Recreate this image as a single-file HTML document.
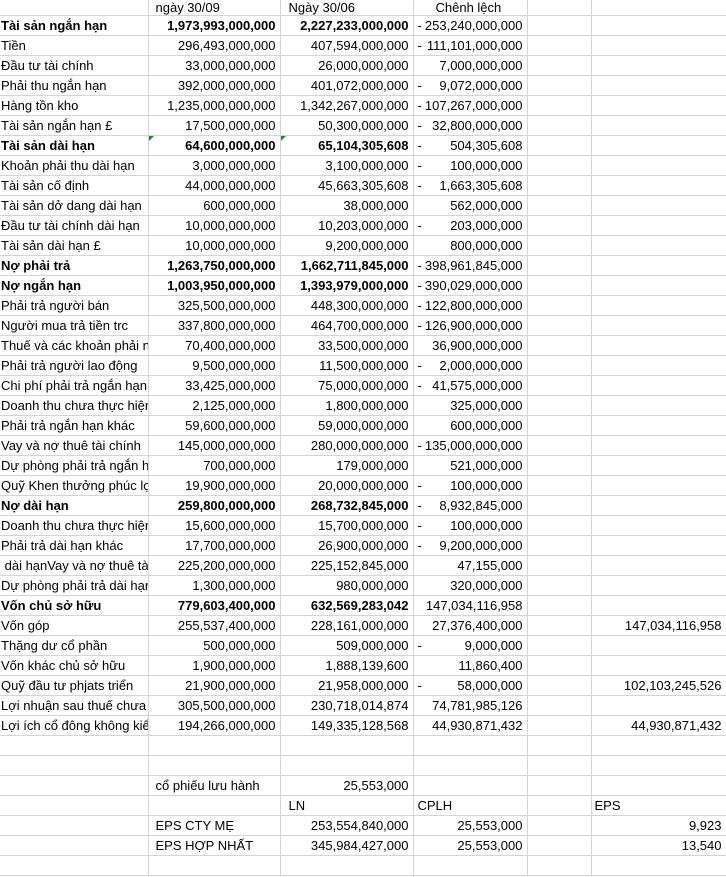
<!DOCTYPE html>
<html><head><meta charset="utf-8">
<style>
html,body{margin:0;padding:0;background:#fff;width:726px;height:877px;overflow:hidden}
table{border-collapse:collapse;table-layout:fixed;width:726px;font-family:"Liberation Sans",sans-serif;font-size:13px;color:#000}
td{border-right:1px solid #d4d4d4;border-bottom:1px solid #d4d4d4;height:19px;padding:0 4px 0 3px;white-space:nowrap;overflow:hidden;text-align:right;line-height:19px;position:relative}
td.l{text-align:left;padding-left:1px}
tr.h td{height:15px;line-height:14px}
tr.b td{font-weight:bold}
.d{float:left;margin-left:1px}
.g:before{content:"";position:absolute;left:0;top:0;border-top:5px solid #1e8a3a;border-right:5px solid transparent}
</style></head><body>
<table>
<colgroup><col style="width:148px"><col style="width:132px"><col style="width:133px"><col style="width:114px"><col style="width:64px"><col style="width:135px"></colgroup>
<tr class="h"><td class="l"></td><td class="l" style="padding-left:7px">ngày 30/09</td><td class="l" style="padding-left:8px">Ngày 30/06</td><td class="l" style="padding-left:22px">Chênh lệch</td><td></td><td></td></tr>
<tr class="b"><td class="l">Tài sản ngắn hạn</td><td>1,973,993,000,000</td><td>2,227,233,000,000</td><td style="font-weight:normal"><span class="d">-</span>253,240,000,000</td><td></td><td></td></tr>
<tr><td class="l">Tiền</td><td>296,493,000,000</td><td>407,594,000,000</td><td><span class="d">-</span>111,101,000,000</td><td></td><td></td></tr>
<tr><td class="l">Đầu tư tài chính</td><td>33,000,000,000</td><td>26,000,000,000</td><td>7,000,000,000</td><td></td><td></td></tr>
<tr><td class="l">Phải thu ngắn hạn</td><td>392,000,000,000</td><td>401,072,000,000</td><td><span class="d">-</span>9,072,000,000</td><td></td><td></td></tr>
<tr><td class="l">Hàng tồn kho</td><td>1,235,000,000,000</td><td>1,342,267,000,000</td><td><span class="d">-</span>107,267,000,000</td><td></td><td></td></tr>
<tr><td class="l">Tài sản ngắn hạn £</td><td>17,500,000,000</td><td>50,300,000,000</td><td><span class="d">-</span>32,800,000,000</td><td></td><td></td></tr>
<tr class="b"><td class="l">Tài sản dài hạn</td><td class="g">64,600,000,000</td><td class="g">65,104,305,608</td><td style="font-weight:normal"><span class="d">-</span>504,305,608</td><td></td><td></td></tr>
<tr><td class="l">Khoản phải thu dài hạn</td><td>3,000,000,000</td><td>3,100,000,000</td><td><span class="d">-</span>100,000,000</td><td></td><td></td></tr>
<tr><td class="l">Tài sản cố định</td><td>44,000,000,000</td><td>45,663,305,608</td><td><span class="d">-</span>1,663,305,608</td><td></td><td></td></tr>
<tr><td class="l">Tài sản dở dang dài hạn</td><td>600,000,000</td><td>38,000,000</td><td>562,000,000</td><td></td><td></td></tr>
<tr><td class="l">Đầu tư tài chính dài hạn</td><td>10,000,000,000</td><td>10,203,000,000</td><td><span class="d">-</span>203,000,000</td><td></td><td></td></tr>
<tr><td class="l">Tài sản dài hạn £</td><td>10,000,000,000</td><td>9,200,000,000</td><td>800,000,000</td><td></td><td></td></tr>
<tr class="b"><td class="l">Nợ phải trả</td><td>1,263,750,000,000</td><td>1,662,711,845,000</td><td style="font-weight:normal"><span class="d">-</span>398,961,845,000</td><td></td><td></td></tr>
<tr class="b"><td class="l">Nợ ngắn hạn</td><td>1,003,950,000,000</td><td>1,393,979,000,000</td><td style="font-weight:normal"><span class="d">-</span>390,029,000,000</td><td></td><td></td></tr>
<tr><td class="l">Phải trả người bán</td><td>325,500,000,000</td><td>448,300,000,000</td><td><span class="d">-</span>122,800,000,000</td><td></td><td></td></tr>
<tr><td class="l">Người mua trả tiền trc</td><td>337,800,000,000</td><td>464,700,000,000</td><td><span class="d">-</span>126,900,000,000</td><td></td><td></td></tr>
<tr><td class="l">Thuế và các khoản phải nộp</td><td>70,400,000,000</td><td>33,500,000,000</td><td>36,900,000,000</td><td></td><td></td></tr>
<tr><td class="l">Phải trả người lao động</td><td>9,500,000,000</td><td>11,500,000,000</td><td><span class="d">-</span>2,000,000,000</td><td></td><td></td></tr>
<tr><td class="l">Chi phí phải trả ngắn hạn</td><td>33,425,000,000</td><td>75,000,000,000</td><td><span class="d">-</span>41,575,000,000</td><td></td><td></td></tr>
<tr><td class="l">Doanh thu chưa thực hiện</td><td>2,125,000,000</td><td>1,800,000,000</td><td>325,000,000</td><td></td><td></td></tr>
<tr><td class="l">Phải trả ngắn hạn khác</td><td>59,600,000,000</td><td>59,000,000,000</td><td>600,000,000</td><td></td><td></td></tr>
<tr><td class="l">Vay và nợ thuê tài chính</td><td>145,000,000,000</td><td>280,000,000,000</td><td><span class="d">-</span>135,000,000,000</td><td></td><td></td></tr>
<tr><td class="l">Dự phòng phải trả ngắn hạn</td><td>700,000,000</td><td>179,000,000</td><td>521,000,000</td><td></td><td></td></tr>
<tr><td class="l">Quỹ Khen thưởng phúc lợi</td><td>19,900,000,000</td><td>20,000,000,000</td><td><span class="d">-</span>100,000,000</td><td></td><td></td></tr>
<tr class="b"><td class="l">Nợ dài hạn</td><td>259,800,000,000</td><td>268,732,845,000</td><td style="font-weight:normal"><span class="d">-</span>8,932,845,000</td><td></td><td></td></tr>
<tr><td class="l">Doanh thu chưa thực hiện</td><td>15,600,000,000</td><td>15,700,000,000</td><td><span class="d">-</span>100,000,000</td><td></td><td></td></tr>
<tr><td class="l">Phải trả dài hạn khác</td><td>17,700,000,000</td><td>26,900,000,000</td><td><span class="d">-</span>9,200,000,000</td><td></td><td></td></tr>
<tr><td class="l">&nbsp;dài hạnVay và nợ thuê tài chính</td><td>225,200,000,000</td><td>225,152,845,000</td><td>47,155,000</td><td></td><td></td></tr>
<tr><td class="l">Dự phòng phải trả dài hạn</td><td>1,300,000,000</td><td>980,000,000</td><td>320,000,000</td><td></td><td></td></tr>
<tr class="b"><td class="l">Vốn chủ sở hữu</td><td>779,603,400,000</td><td>632,569,283,042</td><td style="font-weight:normal">147,034,116,958</td><td></td><td></td></tr>
<tr><td class="l">Vốn góp</td><td>255,537,400,000</td><td>228,161,000,000</td><td>27,376,400,000</td><td></td><td>147,034,116,958</td></tr>
<tr><td class="l">Thặng dư cổ phần</td><td>500,000,000</td><td>509,000,000</td><td><span class="d">-</span>9,000,000</td><td></td><td></td></tr>
<tr><td class="l">Vốn khác chủ sở hữu</td><td>1,900,000,000</td><td>1,888,139,600</td><td>11,860,400</td><td></td><td></td></tr>
<tr><td class="l">Quỹ đầu tư phjats triển</td><td>21,900,000,000</td><td>21,958,000,000</td><td><span class="d">-</span>58,000,000</td><td></td><td>102,103,245,526</td></tr>
<tr><td class="l">Lợi nhuận sau thuế chưa phân phối</td><td>305,500,000,000</td><td>230,718,014,874</td><td>74,781,985,126</td><td></td><td></td></tr>
<tr><td class="l">Lợi ích cổ đông không kiểm soát</td><td>194,266,000,000</td><td>149,335,128,568</td><td>44,930,871,432</td><td></td><td>44,930,871,432</td></tr>
<tr><td></td><td></td><td></td><td></td><td></td><td></td></tr>
<tr><td></td><td></td><td></td><td></td><td></td><td></td></tr>
<tr><td></td><td class="l" style="padding-left:7px">cổ phiếu lưu hành</td><td>25,553,000</td><td></td><td></td><td></td></tr>
<tr><td></td><td></td><td class="l" style="padding-left:8px">LN</td><td class="l" style="padding-left:4px">CPLH</td><td></td><td class="l" style="padding-left:3px">EPS</td></tr>
<tr><td></td><td class="l" style="padding-left:7px">EPS CTY MẸ</td><td>253,554,840,000</td><td>25,553,000</td><td></td><td>9,923</td></tr>
<tr><td></td><td class="l" style="padding-left:7px">EPS HỢP NHẤT</td><td>345,984,427,000</td><td>25,553,000</td><td></td><td>13,540</td></tr>
<tr><td></td><td></td><td></td><td></td><td></td><td></td></tr>
</table>
</body></html>
